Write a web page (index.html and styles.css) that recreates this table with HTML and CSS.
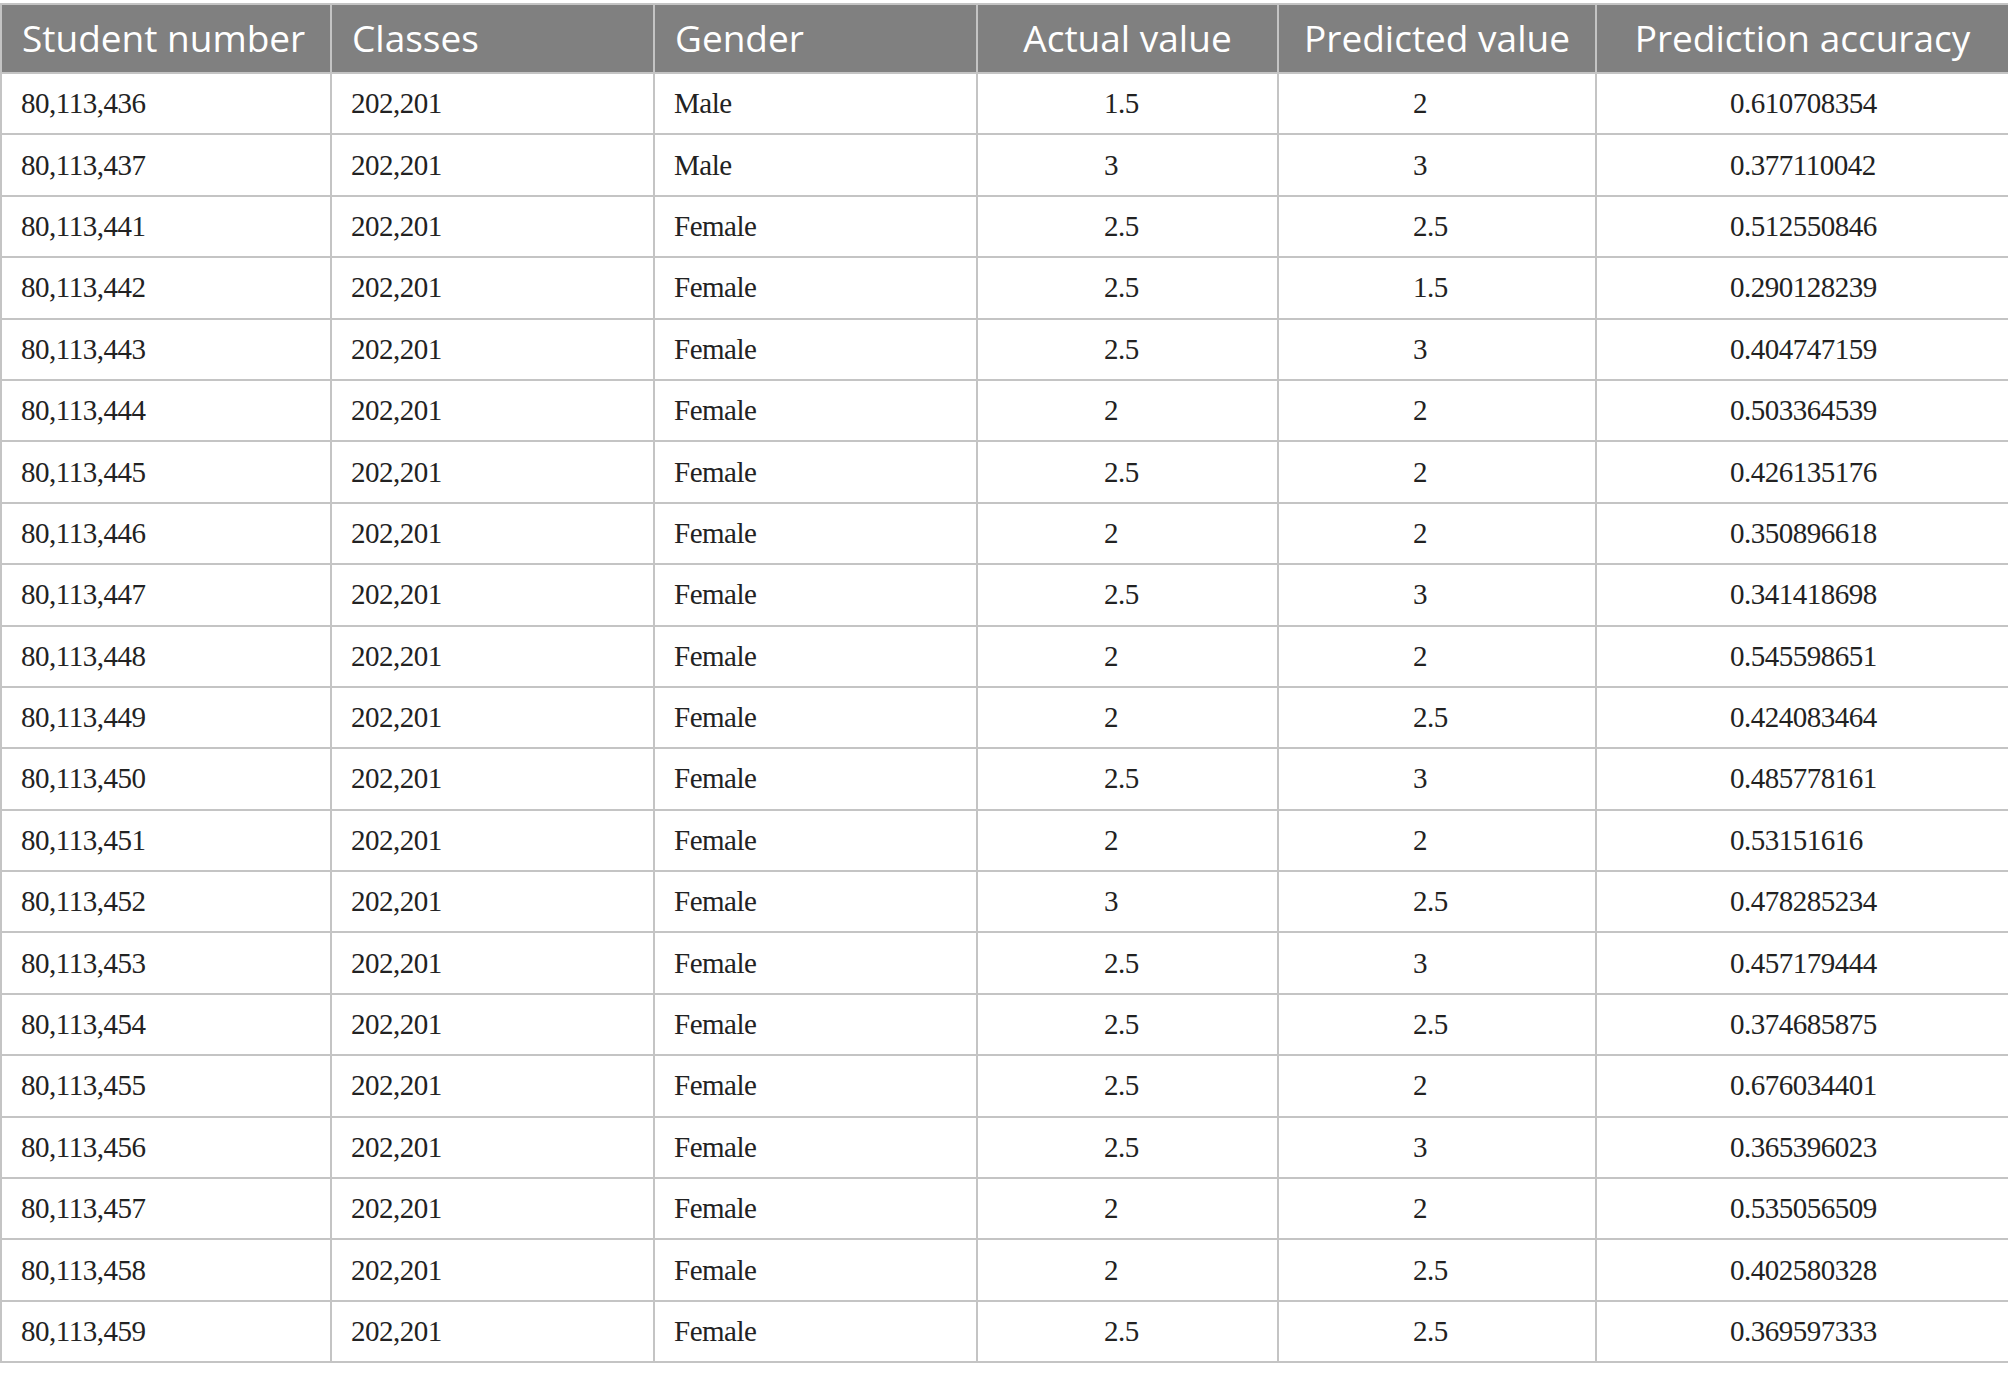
FILE: index.html
```html
<!DOCTYPE html>
<html lang="en">
<head>
<meta charset="utf-8">
<title>Prediction table</title>
<link rel="stylesheet" href="styles.css">
</head>
<body>
<table class="data">
  <colgroup>
    <col class="c1"><col class="c2"><col class="c3"><col class="c4"><col class="c5"><col class="c6">
  </colgroup>
  <thead>
    <tr>
      <th class="left">Student number</th>
      <th class="left">Classes</th>
      <th class="left">Gender</th>
      <th class="center">Actual value</th>
      <th class="center">Predicted value</th>
      <th class="center">Prediction accuracy</th>
    </tr>
  </thead>
  <tbody>
    <tr><td>80,113,436</td><td>202,201</td><td>Male</td><td class="act">1.5</td><td class="pred">2</td><td class="acc">0.610708354</td></tr>
    <tr><td>80,113,437</td><td>202,201</td><td>Male</td><td class="act">3</td><td class="pred">3</td><td class="acc">0.377110042</td></tr>
    <tr><td>80,113,441</td><td>202,201</td><td>Female</td><td class="act">2.5</td><td class="pred">2.5</td><td class="acc">0.512550846</td></tr>
    <tr><td>80,113,442</td><td>202,201</td><td>Female</td><td class="act">2.5</td><td class="pred">1.5</td><td class="acc">0.290128239</td></tr>
    <tr><td>80,113,443</td><td>202,201</td><td>Female</td><td class="act">2.5</td><td class="pred">3</td><td class="acc">0.404747159</td></tr>
    <tr><td>80,113,444</td><td>202,201</td><td>Female</td><td class="act">2</td><td class="pred">2</td><td class="acc">0.503364539</td></tr>
    <tr><td>80,113,445</td><td>202,201</td><td>Female</td><td class="act">2.5</td><td class="pred">2</td><td class="acc">0.426135176</td></tr>
    <tr><td>80,113,446</td><td>202,201</td><td>Female</td><td class="act">2</td><td class="pred">2</td><td class="acc">0.350896618</td></tr>
    <tr><td>80,113,447</td><td>202,201</td><td>Female</td><td class="act">2.5</td><td class="pred">3</td><td class="acc">0.341418698</td></tr>
    <tr><td>80,113,448</td><td>202,201</td><td>Female</td><td class="act">2</td><td class="pred">2</td><td class="acc">0.545598651</td></tr>
    <tr><td>80,113,449</td><td>202,201</td><td>Female</td><td class="act">2</td><td class="pred">2.5</td><td class="acc">0.424083464</td></tr>
    <tr><td>80,113,450</td><td>202,201</td><td>Female</td><td class="act">2.5</td><td class="pred">3</td><td class="acc">0.485778161</td></tr>
    <tr><td>80,113,451</td><td>202,201</td><td>Female</td><td class="act">2</td><td class="pred">2</td><td class="acc">0.53151616</td></tr>
    <tr><td>80,113,452</td><td>202,201</td><td>Female</td><td class="act">3</td><td class="pred">2.5</td><td class="acc">0.478285234</td></tr>
    <tr><td>80,113,453</td><td>202,201</td><td>Female</td><td class="act">2.5</td><td class="pred">3</td><td class="acc">0.457179444</td></tr>
    <tr><td>80,113,454</td><td>202,201</td><td>Female</td><td class="act">2.5</td><td class="pred">2.5</td><td class="acc">0.374685875</td></tr>
    <tr><td>80,113,455</td><td>202,201</td><td>Female</td><td class="act">2.5</td><td class="pred">2</td><td class="acc">0.676034401</td></tr>
    <tr><td>80,113,456</td><td>202,201</td><td>Female</td><td class="act">2.5</td><td class="pred">3</td><td class="acc">0.365396023</td></tr>
    <tr><td>80,113,457</td><td>202,201</td><td>Female</td><td class="act">2</td><td class="pred">2</td><td class="acc">0.535056509</td></tr>
    <tr><td>80,113,458</td><td>202,201</td><td>Female</td><td class="act">2</td><td class="pred">2.5</td><td class="acc">0.402580328</td></tr>
    <tr><td>80,113,459</td><td>202,201</td><td>Female</td><td class="act">2.5</td><td class="pred">2.5</td><td class="acc">0.369597333</td></tr>
  </tbody>
</table>
</body>
</html>
```

FILE: styles.css
```css
html, body {
  margin: 0;
  padding: 0;
  background: #ffffff;
}

body {
  padding-top: 3px;
}

.data {
  width: 2008px;
  table-layout: fixed;
  border-collapse: collapse;
  border: 2px solid #c4c4c4;
}

.c1 { width: 330px; }
.c2 { width: 323px; }
.c3 { width: 323px; }
.c4 { width: 301px; }
.c5 { width: 318px; }
.c6 { width: 413px; }

.data th,
.data td {
  border: 2px solid #c4c4c4;
  vertical-align: middle;
  white-space: nowrap;
}

.data th {
  height: 65px;
  padding: 0 0 2px 20px;
  background: #808080;
  color: #ffffff;
  font-family: "Open Sans", "Noto Sans", sans-serif;
  font-size: 37px;
  font-weight: 400;
  line-height: 1;
}

.data th.left { text-align: left; }
.data th.center { text-align: center; padding-left: 0; }

.data td {
  height: 59.4px;
  padding: 0 0 0 19px;
  color: #222222;
  font-family: "Liberation Serif", "Times New Roman", serif;
  font-size: 29px;
  letter-spacing: -0.5px;
  line-height: 1;
  text-align: left;
}

.data td.act { padding-left: 126px; }
.data td.pred { padding-left: 134px; }
.data td.acc { padding-left: 133px; }
```
